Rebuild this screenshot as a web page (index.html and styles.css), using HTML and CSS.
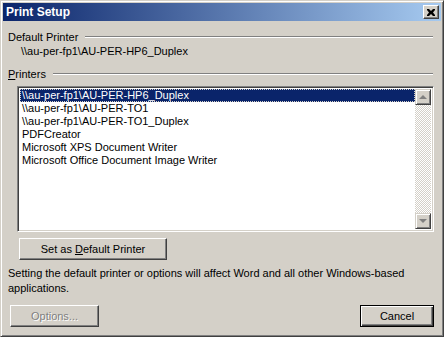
FILE: index.html
```html
<!DOCTYPE html>
<html lang="en">
<head>
    <meta charset="UTF-8">
    <title>Print Setup</title>
    <link rel="stylesheet" href="styles.css">
</head>
<body>

    <div class="dialog">
        <div class="titlebar">
            <span class="title">Print Setup</span>
            <span class="close-btn">
                <svg width="8" height="7" viewBox="0 0 8 7"><path d="M0 0h2l2 2 2-2h2v1l-2 2.5 2 2.5v1h-2l-2-2-2 2h-2v-1l2-2.5-2-2.5z" fill="#000"/></svg>
            </span>
        </div>

        <div class="content">
            <div class="group-head">
                <span>Default Printer</span>
                <span class="etched"></span>
            </div>
            <div class="current">\\au-per-fp1\AU-PER-HP6_Duplex</div>

            <div class="group-head printers-head">
                <span><u>P</u>rinters</span>
                <span class="etched"></span>
            </div>

            <div class="listbox">
                <ul class="items">
                    <li class="selected">\\au-per-fp1\AU-PER-HP6_Duplex</li>
                    <li>\\au-per-fp1\AU-PER-TO1</li>
                    <li>\\au-per-fp1\AU-PER-TO1_Duplex</li>
                    <li>PDFCreator</li>
                    <li>Microsoft XPS Document Writer</li>
                    <li>Microsoft Office Document Image Writer</li>
                </ul>
                <div class="scrollbar">
                    <span class="arrow-btn"><span class="tri up"></span></span>
                    <span class="track"></span>
                    <span class="arrow-btn"><span class="tri down"></span></span>
                </div>
            </div>

            <div class="btn set-default"><span>Set as <u>D</u>efault Printer</span></div>

            <p class="note">Setting the default printer or options will affect Word and all other Windows-based applications.</p>

            <div class="footer">
                <div class="btn disabled">Options...</div>
                <div class="btn default">Cancel</div>
            </div>
        </div>
    </div>

</body>
</html>
```

FILE: styles.css
```css
* {
    box-sizing: border-box;
}

body {
    margin: 0;
    font-family: "Liberation Sans", Arial, sans-serif;
    font-size: 11px;
    color: #000;
    background: #d4d0c8;
}

.dialog {
    width: 444px;
    height: 337px;
    background: #d4d0c8;
    border: 1px solid;
    border-color: #d4d0c8 #404040 #404040 #d4d0c8;
    box-shadow: inset 1px 1px #fff, inset -1px -1px #808080;
    padding: 2px;
    display: flex;
    flex-direction: column;
}

.titlebar {
    height: 18px;
    display: flex;
    align-items: center;
    justify-content: space-between;
    padding: 0 2px 0 3px;
    background: linear-gradient(to right, #0a246a, #a6caf0);
}

.title {
    color: #fff;
    font-weight: bold;
    font-size: 12px;
}

.close-btn {
    width: 16px;
    height: 14px;
    background: #d4d0c8;
    border: 1px solid;
    border-color: #fff #404040 #404040 #fff;
    box-shadow: inset -1px -1px #808080;
    display: flex;
    align-items: center;
    justify-content: center;
}

.content {
    flex: 1;
    padding: 9px 7px 0 5px;
    display: flex;
    flex-direction: column;
}

.group-head {
    display: flex;
    align-items: center;
    gap: 7px;
    height: 14px;
}

.etched {
    flex: 1;
    height: 2px;
    margin-right: 1px;
    border-top: 1px solid #808080;
    border-bottom: 1px solid #fff;
}

.current {
    padding-left: 13px;
    margin-top: 1px;
    height: 14px;
}

.printers-head {
    margin-top: 8px;
}

.listbox {
    margin: 5px 0 0 9px;
    height: 146px;
    display: flex;
    background: #fff;
    border: 1px solid;
    border-color: #808080 #fff #fff #808080;
    box-shadow: inset 1px 1px #404040, inset -1px -1px #d4d0c8;
    padding: 2px;
}

.items {
    flex: 1;
    list-style: none;
    margin: 0;
    padding: 0;
}

.items li {
    height: 13px;
    line-height: 13px;
    padding-left: 2px;
    white-space: nowrap;
}

.items .selected {
    background: #0a246a;
    color: #fff;
    outline: 1px dotted #d4d0c8;
    outline-offset: -1px;
}

.scrollbar {
    width: 16px;
    display: flex;
    flex-direction: column;
}

.track {
    flex: 1;
    background: repeating-conic-gradient(#d4d0c8 0 25%, #fff 0 50%) 0 0 / 2px 2px;
}

.arrow-btn {
    height: 16px;
    background: #d4d0c8;
    border: 1px solid;
    border-color: #d4d0c8 #404040 #404040 #d4d0c8;
    box-shadow: inset 1px 1px #fff, inset -1px -1px #808080;
    display: flex;
    align-items: center;
    justify-content: center;
}

.tri {
    width: 0;
    height: 0;
    border-left: 4px solid transparent;
    border-right: 4px solid transparent;
}

.tri.up {
    border-bottom: 4px solid #808080;
}

.tri.down {
    border-top: 4px solid #808080;
}

.btn {
    height: 22px;
    display: flex;
    align-items: center;
    justify-content: center;
    background: #d4d0c8;
    border: 1px solid;
    border-color: #fff #404040 #404040 #fff;
    box-shadow: inset -1px -1px #808080;
}

.set-default {
    width: 148px;
    margin: 6px 0 0 11px;
}

.note {
    margin: 6px 0 0 0;
    line-height: 15px;
}

.footer {
    margin-top: auto;
    margin-bottom: 7px;
    display: flex;
    justify-content: space-between;
    padding-left: 2px;
}

.footer .btn {
    width: 89px;
}

.btn.disabled {
    color: #808080;
    text-shadow: 1px 1px #fff;
}

.btn.default {
    width: 74px;
    border: 1px solid #000;
    box-shadow: inset 1px 1px #fff, inset -1px -1px #404040, inset -2px -2px #808080;
}
```
